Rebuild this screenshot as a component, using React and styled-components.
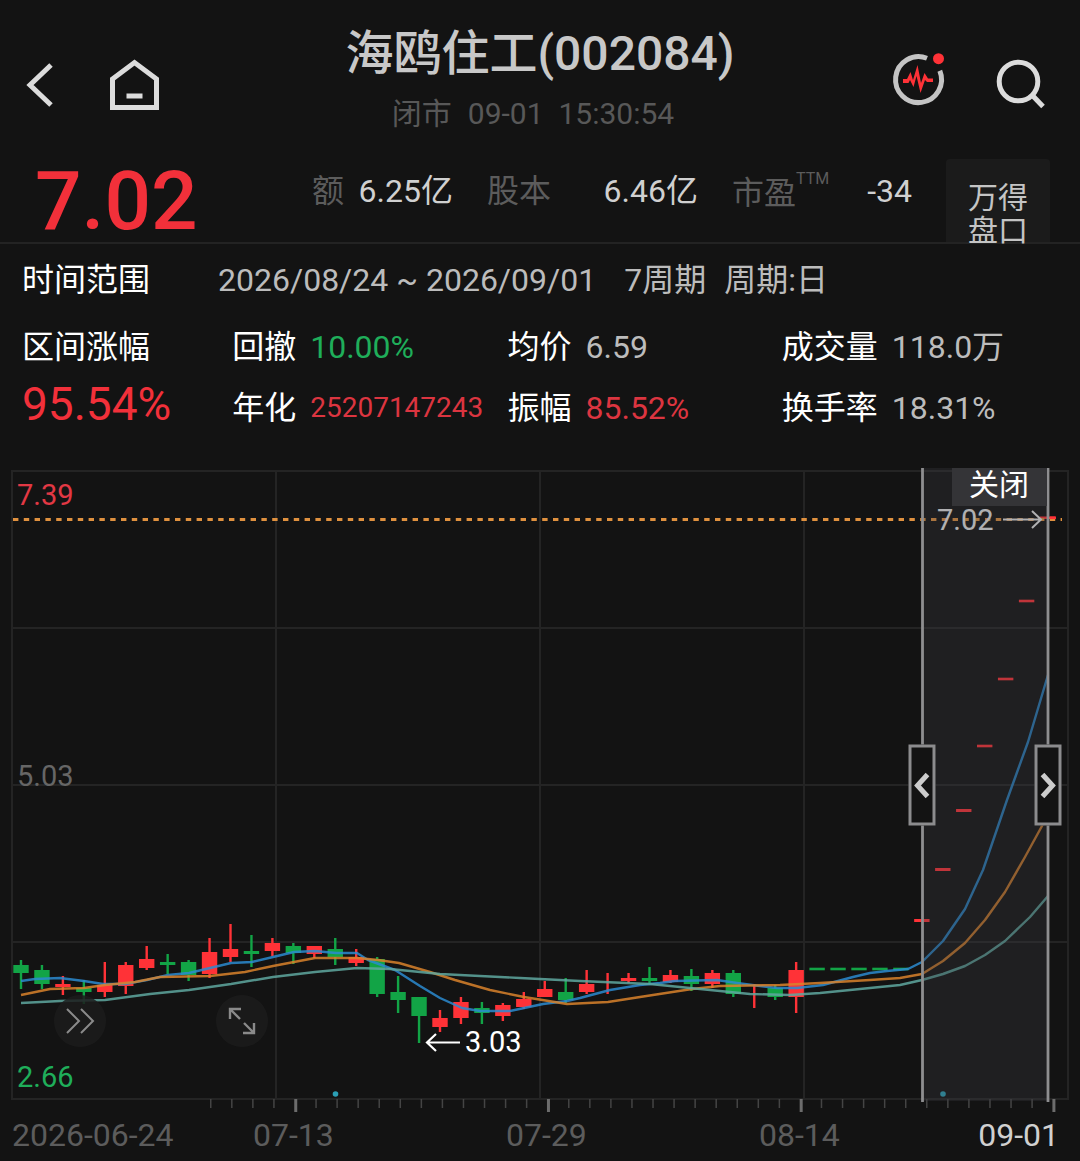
import React from 'react'
import styled, { createGlobalStyle } from 'styled-components'

const RED = '#f2303a'
const GREEN = '#1fae5a'

const GlobalStyle = createGlobalStyle`
  * {
    box-sizing: border-box;
  }

  body {
    margin: 0;
    background: #131313;
  }

  button {
    margin: 0;
    padding: 0;
    border: 0;
    background: none;
    color: inherit;
    font: inherit;
    cursor: pointer;
  }
`

const Page = styled.div`
  min-height: 100vh;
  background: #131313;
  color: #fff;
  font-family: Roboto, 'Noto Sans CJK SC', sans-serif;
  font-size: 32px;
  line-height: 40px;
  white-space: nowrap;
`

const Header = styled.header`
  display: grid;
  grid-template-columns: 1fr auto 1fr;
  align-items: end;
  padding: 25px 20px 0;
`

const Nav = styled.nav`
  display: flex;
  justify-content: ${props => props.$end ? 'flex-end' : 'flex-start'};
  gap: 45px;
  margin-bottom: 21px;
  padding-right: ${props => props.$end ? 12 : 0}px;
`

const IconButton = styled.button`
  height: 56px;
  color: #dcdcdc;

  svg {
    display: block;
    overflow: visible;
    fill: none;
    stroke: currentColor;
    stroke-width: 5;
  }
`

const Heading = styled.div`
  text-align: center;
`

const Title = styled.h1`
  margin: 0 0 11px;
  color: #c8c8c8;
  font-size: 48px;
  font-weight: 500;
  line-height: 58px;
`

const Status = styled.div`
  display: flex;
  justify-content: center;
  gap: 16px;
  padding-right: 14px;
  color: #585858;
  font-size: 30px;
`

const Quote = styled.section`
  display: grid;
  grid-template-columns: 277fr 175fr 245fr 214fr 104px;
  align-items: start;
  height: 110px;
  padding: 0 30px 0 35px;
  border-bottom: 2px solid #232323;
`

const Price = styled.strong`
  margin-top: 25px;
  color: ${RED};
  font-size: 82px;
  font-weight: 500;
  line-height: 84px;
`

const QuoteItem = styled.div`
  display: flex;
  justify-content: space-between;
  margin-top: 37px;
  padding-right: 34px;
  color: #d0d0d0;
`

const QuoteLabel = styled.span`
  color: #5c5c5c;

  sup {
    font-size: 16px;
    line-height: 16px;
    vertical-align: 20px;
  }
`

const WindButton = styled.button`
  display: flex;
  flex-direction: column;
  align-items: center;
  height: 83px;
  margin-top: 25px;
  padding-top: 22px;
  border-radius: 4px 4px 0 0;
  background: #1b1b1b;
  color: #c4c4c4;
  font-size: 30px;
  line-height: 33px;
`

const Period = styled.div`
  display: flex;
  padding: 16px 22px 0;
  color: #bcbcbc;
`

const PeriodLabel = styled.span`
  flex: 0 0 196px;
  color: #fff;
`

const PeriodValue = styled.span`
  margin-right: ${props => props.$gap || 0}px;
`

const Stats = styled.section`
  display: grid;
  grid-template-columns: 210fr 275fr 274fr 276fr;
  margin-top: 27px;
  padding: 0 22px;
`

const StatColumn = styled.div`
  display: flex;
  flex-direction: column;
  gap: 21px;
`

const Gain = styled.div`
  strong {
    display: block;
    margin-top: 13px;
    color: ${RED};
    font-size: 46px;
    font-weight: 400;
    line-height: 48px;
  }
`

const Stat = styled.div`
  display: flex;
  gap: 14px;
`

const StatValue = styled.span`
  color: ${props => props.$color || '#bcbcbc'};
  font-size: ${props => props.$small ? 28 : 32}px;
`

const Chart = styled.section`
  position: relative;
  margin-top: 40px;
`

const Plot = styled.svg`
  display: block;
  width: 100%;
  height: auto;

  text {
    font-size: 29px;
  }
`

// sits on the chart, centred on a point given in percent of its size
const Floating = styled.button`
  position: absolute;
  left: ${props => props.$x}%;
  top: ${props => props.$y}%;
  transform: translate(-50%, -50%);
`

const Handle = styled(Floating)`
  display: grid;
  place-items: center;
  width: 27px;
  height: 81px;
  border: 3px solid #8c8c8e;
  background: #131313;
`

const RoundButton = styled(Floating)`
  display: grid;
  place-items: center;
  width: 52px;
  height: 52px;
  border-radius: 50%;
  background: rgba(28, 28, 28, 0.85);
`

const CloseButton = styled.button`
  position: absolute;
  top: 0;
  right: 3.1%;
  width: 95px;
  height: 38px;
  padding-bottom: 4px;
  background: #343437;
  font-size: 30px;
  line-height: 34px;
`

const Axis = styled.div`
  display: grid;
  grid-template-columns: 241fr 253fr 253fr 300fr;
  padding: 1px 21px 0 12px;
  color: #5c5c5c;
`

const AxisEnd = styled.span`
  display: flex;
  justify-content: space-between;

  span {
    color: #d0d0d0;
  }
`

// high, body top, body bottom, low, 1 = up
const candles = [
  [960, 965, 973, 989, 0],
  [965, 970, 984, 989, 0],
  [976, 984, 987, 995, 1],
  [980, 988, 992, 1004, 0],
  [962, 985, 992, 997, 1],
  [962, 965, 986, 994, 1],
  [946, 959, 968, 970, 1],
  [954, 962, 965, 974, 0],
  [960, 962, 975, 981, 0],
  [938, 952, 974, 978, 1],
  [924, 949, 957, 962, 1],
  [935, 951, 954, 967, 0],
  [938, 943, 951, 956, 1],
  [943, 946, 953, 964, 0],
  [946, 946, 954, 958, 1],
  [938, 949, 957, 965, 0],
  [949, 957, 963, 966, 1],
  [957, 959, 994, 997, 0],
  [976, 992, 1000, 1013, 0],
  [997, 997, 1016, 1043, 0],
  [1010, 1018, 1027, 1032, 1],
  [997, 1002, 1018, 1024, 1],
  [1002, 1008, 1013, 1024, 0],
  [1003, 1005, 1016, 1021, 1],
  [992, 999, 1007, 1009, 1],
  [981, 989, 997, 997, 1],
  [978, 992, 1000, 1003, 0],
  [970, 984, 992, 994, 1],
  [973, 984, 984, 994, 1],
  [973, 978, 981, 983, 1],
  [967, 978, 981, 984, 0],
  [970, 975, 982, 983, 1],
  [969, 976, 984, 991, 0],
  [970, 973, 984, 988, 1],
  [970, 973, 994, 997, 0],
  [984, 990, 990, 1008, 1],
  [985, 988, 997, 1000, 0],
  [962, 970, 997, 1013, 1],
  [967.7, 967.7, 970.3, 970.3, 0],
  [967.7, 967.7, 970.3, 970.3, 0],
  [967.7, 967.7, 970.3, 970.3, 0],
  [967.7, 967.7, 970.3, 970.3, 0],
  [967.7, 967.7, 970.3, 970.3, 0],
  [919, 919, 922, 922, 1],
  [868, 868, 871, 871, 1],
  [809, 809, 812, 812, 1],
  [744.7, 744.7, 747.3, 747.3, 1],
  [677.7, 677.7, 680.3, 680.3, 1],
  [599.7, 599.7, 602.3, 602.3, 1],
  [516.5, 516.5, 519, 519, 1]
]

const averages = [
  { color: '#2b8bd0', points: '21,981 35,979 60,978 84,981 103,984 125,984 147,980 168,975 189,973 210,968 231,963 252,962 273,957 294,952 315,951 336,953 357,953 368,960 395,970 420,986 440,998 462,1008 480,1011 510,1011 543,1004 567,1001 580,998 610,990 640,985 660,983 675,981 717,980 737,983 760,986 777,988 797,988 823,985 853,977 870,973 887,971 908,969 922,962 943,941 965,909 983,870 1007,800 1028,742 1048,675' },
  { color: '#d9822b', points: '21,995 50,989 84,988 105,985 135,982 160,977 210,976 245,972 273,966 294,962 315,958 357,958 378,960 399,963 430,972 455,980 490,990 524,997 567,1004 608,1002 640,997 692,989 720,986 780,985 820,983 870,980 900,978 922,974 943,961 965,943 985,920 1005,892 1025,857 1048,815' },
  { color: '#5fa8a0', points: '21,1003 60,1001 105,1000 150,994 189,990 231,984 273,977 315,972 357,968 390,969 440,974 520,978 580,981 650,984 700,989 750,994 790,995 820,993 860,989 900,985 922,980 943,974 965,966 985,955 1005,941 1030,917 1048,896' }
]

const ticks = Array.from({ length: 41 }, (_, i) => ({ x: 211 + i * 21.06, major: i % 12 === 4 }))

function Candle({ index, data }) {
  const [high, top, bottom, low, up] = data
  const x = 21 + index * 20.95
  return (
    <g fill={up ? '#ff3237' : '#12a446'}>
      {low - high > 4 && <rect x={x - 1.2} y={high} width="2.4" height={low - high} />}
      {bottom > top && <rect x={x - 7.7} y={top} width="15.4" height={bottom - top} />}
    </g>
  )
}

function PriceChart() {
  return (
    <Plot viewBox="0 468 1080 646" role="img" aria-label="K线图">
      <g stroke="#242424" strokeWidth="2" fill="none">
        <rect x="12" y="471" width="1056" height="628" />
        <path d="M276 471V1099M540 471V1099M804 471V1099M12 628H1068M12 785H1068M12 942H1068" />
      </g>
      {ticks.map(tick =>
        <rect key={tick.x} x={tick.x - 1} y="1099" width={tick.major ? 3 : 1.5} height={tick.major ? 13 : 9} fill={tick.major ? '#6c6c6c' : '#444'} />
      )}
      {candles.map((data, i) => <Candle key={i} index={i} data={data} />)}
      {averages.map(line =>
        <polyline key={line.color} points={line.points} fill="none" stroke={line.color} strokeWidth="2.4" strokeLinejoin="round" opacity="0.85" />
      )}
      <path d="M13 519.5H1062" stroke="#e0913f" strokeWidth="2.8" strokeDasharray="5.4 5.4" />
      <text x="17" y="505" fill="#e23844">7.39</text>
      <text x="17" y="786" fill="#666">5.03</text>
      <text x="17" y="1087" fill={GREEN}>2.66</text>
      <text x="465" y="1052" fill="#fff">3.03</text>
      <path d="M460 1042.5H427M436 1034L427 1042.5L436 1051" fill="none" stroke="#fff" strokeWidth="2.2" />
      <text x="937" y="530" fill="#e8e8e8">7.02</text>
      <path d="M1003 519.5H1041M1032 511L1041 519.5L1032 528" fill="none" stroke="#e8e8e8" strokeWidth="2" />
      <circle cx="335.5" cy="1094" r="2.8" fill="#2b9fb5" />
      <circle cx="943" cy="1094" r="2.8" fill="#2b9fb5" />
      <rect x="922" y="468" width="126" height="633" fill="#3c3c42" opacity="0.32" />
      <path d="M922.5 468V1102M1048 468V1102" stroke="#8e8e90" strokeWidth="2.8" />
      <path d="M1050 517.8H1056" stroke="#ff3237" strokeWidth="2.6" />
    </Plot>
  )
}

export default function App() {
  return (
    <Page>
      <GlobalStyle />
      <Header>
        <Nav>
          <IconButton aria-label="返回">
            <svg width="40" height="56"><path d="M31 8L10 28L31 48" /></svg>
          </IconButton>
          <IconButton aria-label="首页">
            <svg width="56" height="56">
              <path d="M7.5 50.5V22L29.5 5.500L51.5 22V50.5Z" />
              <path d="M21.5 39H37.5" />
            </svg>
          </IconButton>
        </Nav>
        <Heading>
          <Title>海鸥住工(002084)</Title>
          <Status>
            <span>闭市</span>
            <span>09-01&nbsp; 15:30:54</span>
          </Status>
        </Heading>
        <Nav $end>
          <IconButton aria-label="诊股">
            <svg width="56" height="56">
              <path d="M36 1.2A23 23 0 1 0 48.8 13.8" stroke="#c4c4c4" />
              <circle cx="47.5" cy="1.7" r="5.5" fill="#ff3237" stroke="none" />
              <path
                d="M12 22H16L19.500 15L22 23L26.5 8L30 26L33.5 16L37 21.5H42V25H36L34 23L29.5 36L25.5 19L22.500 30L19 23L17.500 26H12Z"
                fill="#ff3237"
                stroke="none"
              />
            </svg>
          </IconButton>
          <IconButton aria-label="搜索">
            <svg width="56" height="56">
              <circle cx="26.5" cy="24.5" r="19.3" />
              <path d="M40 38L51 49.5" />
            </svg>
          </IconButton>
        </Nav>
      </Header>

      <Quote>
        <Price>7.02</Price>
        <QuoteItem>
          <QuoteLabel>额</QuoteLabel>
          <span>6.25亿</span>
        </QuoteItem>
        <QuoteItem>
          <QuoteLabel>股本</QuoteLabel>
          <span>6.46亿</span>
        </QuoteItem>
        <QuoteItem>
          <QuoteLabel>市盈<sup>TTM</sup></QuoteLabel>
          <span>-34</span>
        </QuoteItem>
        <WindButton>
          <span>万得</span>
          <span>盘口</span>
        </WindButton>
      </Quote>

      <Period>
        <PeriodLabel>时间范围</PeriodLabel>
        <PeriodValue $gap={28}>2026/08/24 ~ 2026/09/01</PeriodValue>
        <PeriodValue $gap={18}>7周期</PeriodValue>
        <PeriodValue>周期:日</PeriodValue>
      </Period>

      <Stats>
        <Gain>
          区间涨幅
          <strong>95.54%</strong>
        </Gain>
        <StatColumn>
          <Stat>回撤<StatValue $color={GREEN}>10.00%</StatValue></Stat>
          <Stat>年化<StatValue $color="#dc3540" $small>25207147243</StatValue></Stat>
        </StatColumn>
        <StatColumn>
          <Stat>均价<StatValue>6.59</StatValue></Stat>
          <Stat>振幅<StatValue $color="#dc3540">85.52%</StatValue></Stat>
        </StatColumn>
        <StatColumn>
          <Stat>成交量<StatValue>118.0万</StatValue></Stat>
          <Stat>换手率<StatValue>18.31%</StatValue></Stat>
        </StatColumn>
      </Stats>

      <Chart>
        <PriceChart />
        <CloseButton>关闭</CloseButton>
        <Handle $x={85.4} $y={49.1} aria-label="区间起点">
          <svg width="20" height="26"><path d="M15 2L5 13L15 24" fill="none" stroke="#ccc" strokeWidth="5" /></svg>
        </Handle>
        <Handle $x={97} $y={49.1} aria-label="区间终点">
          <svg width="20" height="26"><path d="M5 2L15 13L5 24" fill="none" stroke="#ccc" strokeWidth="5" /></svg>
        </Handle>
        <RoundButton $x={7.4} $y={85.6} aria-label="快进">
          <svg width="30" height="28"><path d="M2 2L14 14L2 26M16 2L28 14L16 26" fill="none" stroke="#8a8a8a" strokeWidth="2" /></svg>
        </RoundButton>
        <RoundButton $x={22.4} $y={85.6} aria-label="全屏">
          <svg width="28" height="28">
            <path d="M2 12V2H13M2 2L12 12M26 16V26H15M26 26L16 16" fill="none" stroke="#8a8a8a" strokeWidth="2.4" />
          </svg>
        </RoundButton>
      </Chart>

      <Axis>
        <span>2026-06-24</span>
        <span>07-13</span>
        <span>07-29</span>
        <AxisEnd>08-14<span>09-01</span></AxisEnd>
      </Axis>
    </Page>
  )
}
